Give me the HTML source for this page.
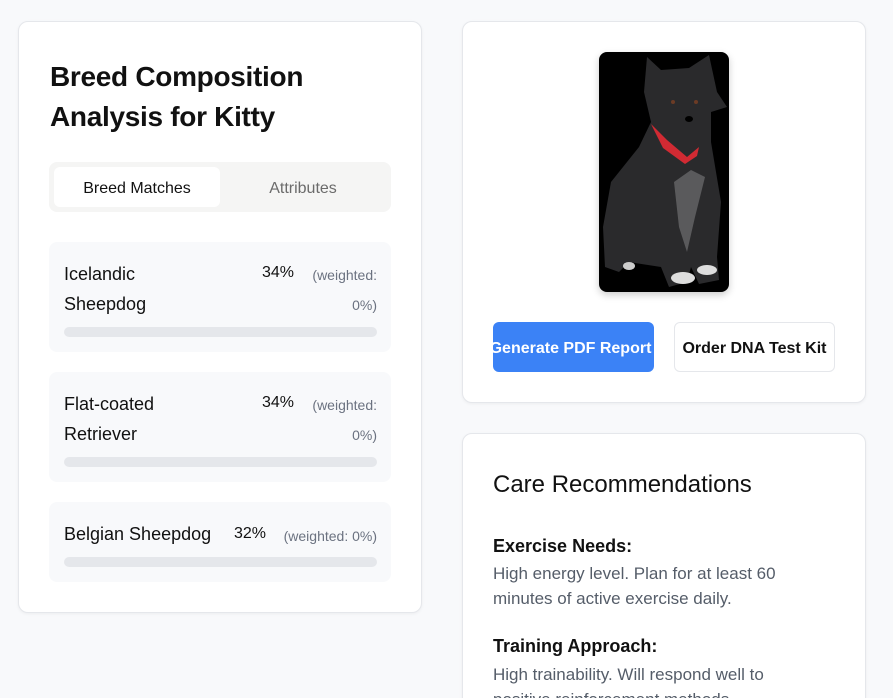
<!DOCTYPE html>
<html><head><meta charset="utf-8"><style>
*{box-sizing:border-box;margin:0;padding:0}
html,body{width:893px;height:698px;overflow:hidden}
body{background:#f8f9fb;font-family:"Liberation Sans",sans-serif;color:#111;position:relative}
.card{position:absolute;background:#fff;border:1px solid #e5e7eb;border-radius:10px;box-shadow:0 1px 3px rgba(0,0,0,.05)}
h1{position:absolute;left:31px;top:35px;font-size:28px;line-height:40px;font-weight:bold;letter-spacing:-0.3px}
.tabs{position:absolute;left:30px;top:140px;width:342px;height:50px;background:#f5f5f4;border-radius:8px}
.tab{position:absolute;top:5px;height:40px;line-height:44px;text-align:center;font-size:16px}
.item{position:absolute;left:30px;width:342px;background:#f8f9fb;border-radius:8px}
.name{position:absolute;left:15px;top:17px;font-size:18px;line-height:30px;color:#111}
.pct{position:absolute;font-size:16px;color:#111;line-height:30px}
.w{position:absolute;font-size:14px;color:#6b7280;text-align:right}
.bar{position:absolute;left:15px;right:14px;height:10px;background:#e5e7eb;border-radius:5px}
.btn{position:absolute;top:300px;width:161px;height:50px;border-radius:6px;font-size:16px;font-weight:bold;line-height:54px;text-align:center;white-space:nowrap;overflow:hidden}
h3{font-size:18px;font-weight:bold;color:#111}
p{font-size:17px;line-height:25px;color:#555d69}
</style></head><body>
<div class="card" style="left:18px;top:21px;width:404px;height:592px">
<h1>Breed Composition<br>Analysis for Kitty</h1>
<div class="tabs">
<div class="tab" style="left:5px;width:166px;background:#fff;border-radius:6px;color:#111">Breed Matches</div>
<div class="tab" style="left:171px;width:166px;color:#6b6b6b">Attributes</div>
</div>
<div class="item" style="top:220px;height:110px">
<div class="name">Icelandic<br>Sheepdog</div>
<div class="pct" style="left:213px;top:16px">34%</div>
<div class="w" style="right:14px;top:18px;line-height:30px;width:90px">(weighted:<br>0%)</div>
<div class="bar" style="top:85px"></div></div>
<div class="item" style="top:350px;height:110px">
<div class="name">Flat-coated<br>Retriever</div>
<div class="pct" style="left:213px;top:16px">34%</div>
<div class="w" style="right:14px;top:18px;line-height:30px;width:90px">(weighted:<br>0%)</div>
<div class="bar" style="top:85px"></div></div>
<div class="item" style="top:480px;height:80px">
<div class="name">Belgian Sheepdog</div>
<div class="pct" style="left:185px;top:17px">32%</div>
<div class="w" style="right:14px;top:19px;line-height:30px;width:120px">(weighted: 0%)</div>
<div class="bar" style="top:55px"></div></div>
</div>

<div class="card" style="left:462px;top:21px;width:404px;height:382px">
<div style="position:absolute;left:136px;top:30px;width:130px;height:240px;background:#000;border-radius:8px;overflow:hidden;box-shadow:0 3px 8px rgba(0,0,0,.2)">
<svg width="130" height="240" viewBox="0 0 130 240">
<path d="M48 5 L62 18 L90 16 L110 3 L118 40 L128 55 L112 60 L112 90 L122 150 L118 205 L120 228 L100 232 L92 215 L88 230 L70 235 L62 215 L30 210 L20 220 L6 215 L4 175 L12 130 L40 95 L52 70 L45 40 Z" fill="#2a2a2c"/>
<path d="M75 130 L92 118 L106 125 L96 165 L88 200 L80 175 Z" fill="#5a5a5c"/>
<path d="M52 72 L68 88 L88 105 L100 95 L98 104 L86 112 L64 96 Z" fill="#d12a33"/>
<ellipse cx="84" cy="226" rx="12" ry="6" fill="#ddd"/>
<ellipse cx="108" cy="218" rx="10" ry="5" fill="#ddd"/>
<ellipse cx="30" cy="214" rx="6" ry="4" fill="#ccc"/>
<circle cx="74" cy="50" r="2" fill="#6b3b25"/><circle cx="97" cy="50" r="2" fill="#6b3b25"/>
<ellipse cx="90" cy="67" rx="4" ry="3" fill="#000"/>
</svg></div>
<div class="btn" style="left:30px;background:#3b82f6;color:#fff"><span style="margin-left:-6px">Generate PDF Report</span></div>
<div class="btn" style="left:211px;background:#fff;border:1px solid #e5e7eb;color:#111;line-height:52px">Order DNA Test Kit</div>
</div>

<div class="card" style="left:462px;top:433px;width:404px;height:300px">
<div style="position:absolute;left:30px;top:37px;font-size:24px;color:#111">Care Recommendations</div>
<div style="position:absolute;left:30px;top:102px;width:340px">
<h3>Exercise Needs:</h3>
<p style="margin-top:4px">High energy level. Plan for at least 60<br>minutes of active exercise daily.</p>
<h3 style="margin-top:25px">Training Approach:</h3>
<p style="margin-top:5px">High trainability. Will respond well to<br>positive reinforcement methods.</p>
</div></div>
</body></html>
